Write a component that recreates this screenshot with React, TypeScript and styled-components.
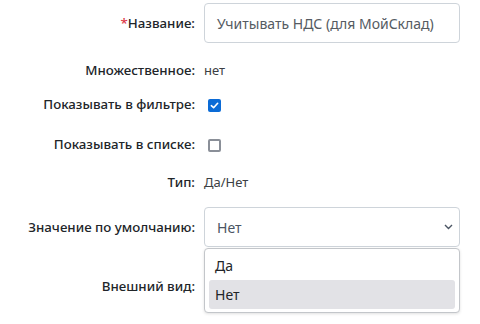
import styled, { createGlobalStyle } from "styled-components";

const GlobalStyle = createGlobalStyle`
  body {
    margin: 0;
    background: #ffffff;
    font-family: "Noto Sans", "Open Sans", sans-serif;
    font-size: 14px;
  }
`;

const Form = styled.div`
  width: 480px;
  height: 324px;
  display: flex;
  flex-direction: column;
  box-sizing: border-box;
  overflow: hidden;
`;

const Row = styled.div<{ $top: number; $h?: number }>`
  display: grid;
  grid-template-columns: 195px 256px;
  column-gap: 9px;
  align-items: center;
  margin-top: ${(p) => p.$top}px;
  height: ${(p) => p.$h ?? 20}px;
`;

const Label = styled.div`
  text-align: right;
  color: #212529;
  font-size: 13.3px;
  font-weight: 500;
  white-space: nowrap;
`;

const Star = styled.span`
  color: #dc3545;
`;

const Value = styled.div`
  color: #3c3f44;
  font-size: 13px;
`;

const Input = styled.div`
  height: 40px;
  box-sizing: border-box;
  border: 1px solid #ced4da;
  border-radius: 4px;
  padding: 0 12px;
  display: flex;
  align-items: center;
  color: #555b62;
`;

const Select = styled(Input)`
  justify-content: space-between;
  color: #4b5563;
  position: relative;
  padding-right: 6px;
`;

const Check = styled.span<{ $on?: boolean }>`
  width: 13px;
  height: 13px;
  box-sizing: border-box;
  border-radius: 2px;
  display: inline-flex;
  align-items: center;
  justify-content: center;
  margin-left: 4px;
  vertical-align: middle;
  background: ${(p) => (p.$on ? "#0b6bd6" : "#fff")};
  border: ${(p) => (p.$on ? "none" : "2px solid #8a8f98")};
`;

const Menu = styled.div`
  position: absolute;
  left: -1px;
  right: -1px;
  top: 40px;
  border: 1px solid #c3c6ca;
  border-radius: 4px;
  background: #fff;
  box-shadow: 0 1px 3px rgba(0, 0, 0, 0.12);
  padding: 2px 4px 3px;
  z-index: 2;
`;

const Option = styled.div<{ $active?: boolean }>`
  height: 29px;
  display: flex;
  align-items: center;
  padding: 0 6px;
  border-radius: 3px;
  color: #212529;
  background: ${(p) => (p.$active ? "#e2e2e6" : "transparent")};
`;

export default function App() {
  return (
    <>
      <GlobalStyle />
      <Form>
        <Row $top={3} $h={40}>
          <Label>
            <Star>*</Star>Название:
          </Label>
          <Input>Учитывать НДС (для МойСклад)</Input>
        </Row>
        <Row $top={17}>
          <Label>Множественное:</Label>
          <Value>нет</Value>
        </Row>
        <Row $top={14}>
          <Label>Показывать в фильтре:</Label>
          <div>
            <Check $on>
              <svg width="9" height="9" viewBox="0 0 10 10">
                <path d="M1.5 5.2 L4 7.5 L8.5 2.5" stroke="#fff" strokeWidth="1.8" fill="none" strokeLinecap="round" strokeLinejoin="round" />
              </svg>
            </Check>
          </div>
        </Row>
        <Row $top={20}>
          <Label>Показывать в списке:</Label>
          <div>
            <Check />
          </div>
        </Row>
        <Row $top={18}>
          <Label>Тип:</Label>
          <Value>Да/Нет</Value>
        </Row>
        <Row $top={15} $h={40}>
          <Label>Значение по умолчанию:</Label>
          <Select>
            Нет
            <svg width="9" height="6" viewBox="0 0 9 6">
              <path d="M1 1 L4.5 4.5 L8 1" stroke="#4b5563" strokeWidth="1.4" fill="none" />
            </svg>
            <Menu>
              <Option>Да</Option>
              <Option $active>Нет</Option>
            </Menu>
          </Select>
        </Row>
        <Row $top={29}>
          <Label>Внешний вид:</Label>
          <div />
        </Row>
      </Form>
    </>
  );
}
